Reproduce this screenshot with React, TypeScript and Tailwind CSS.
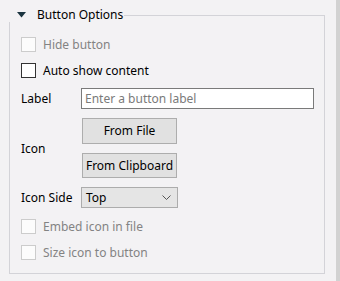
const font = { fontFamily: '"Noto Sans", "Segoe UI", sans-serif' };

const CheckRow = ({ label, checked, disabled }: { label: string; checked?: boolean; disabled?: boolean }) => (
  <div className="flex items-center h-[15px]">
    <span
      className={
        disabled
          ? "w-[15px] h-[15px] border border-[#cccccc] bg-[#fcfcfc] flex-shrink-0"
          : "w-[15px] h-[15px] border border-[#333333] bg-white flex-shrink-0"
      }
    >
      {checked ? "✓" : null}
    </span>
    <span className={disabled ? "ml-[7px] text-[#838383]" : "ml-[7px] text-black"}>{label}</span>
  </div>
);

export default function App() {
  return (
    <div className="w-[340px] h-[281px] flex bg-[#f3f2f4] text-[12px] leading-none overflow-hidden" style={font}>
      <div className="w-[336px] flex flex-col">
        {/* Header */}
        <div className="flex items-start h-[14px] mt-[8px]">
          <div className="flex items-center h-[14px] ml-[17px]">
            <svg width="9" height="6" viewBox="0 0 9 6" className="mb-[1px]">
              <polygon points="0,0 9,0 4.5,5.5" fill="#1b3440" />
            </svg>
            <span className="ml-[11px] text-black whitespace-nowrap">Button Options</span>
          </div>
          <div className="flex-1 ml-[1px] mr-[11px] mt-[7px] h-[7px] border-t border-r border-[#d3d3d8]" />
        </div>

        {/* Group body */}
        <div className="ml-[9px] w-[316px] h-[252px] border-l border-r border-b border-[#d3d3d8] pl-[11px] pt-[15px] flex flex-col">
          <CheckRow label="Hide button" disabled />
          <div className="mt-[11px]">
            <CheckRow label="Auto show content" />
          </div>

          <div className="mt-[10px] flex items-center h-[21px]">
            <span className="w-[60px]">Label</span>
            <div className="w-[233px] h-[21px] border border-[#7a7a7a] bg-white flex items-center pl-[3px] text-[#7a7a7a]">
              Enter a button label
            </div>
          </div>

          <div className="mt-[9px] flex">
            <span className="w-[60px] flex items-center pt-[2px]">Icon</span>
            <div className="flex flex-col gap-[9px] ml-[1px]">
              <button className="w-[95px] h-[26px] border border-[#adadad] bg-[#e1e1e1] text-black">From File</button>
              <button className="w-[95px] h-[25px] border border-[#adadad] bg-[#e1e1e1] text-black">From Clipboard</button>
            </div>
          </div>

          <div className="mt-[9px] flex items-center h-[21px]">
            <span className="w-[60px]">Icon Side</span>
            <div className="w-[97px] h-[21px] border border-[#acacac] bg-[#e5e5e5] flex items-center justify-between pl-[4px] pr-[6px] text-black">
              <span>Top</span>
              <svg width="9" height="5" viewBox="0 0 9 5">
                <polyline points="0.5,0.5 4.5,4.5 8.5,0.5" fill="none" stroke="#555" strokeWidth="1" />
              </svg>
            </div>
          </div>

          <div className="mt-[11px]">
            <CheckRow label="Embed icon in file" disabled />
          </div>
          <div className="mt-[11px]">
            <CheckRow label="Size icon to button" disabled />
          </div>
        </div>
      </div>
      <div className="w-[4px] h-full bg-[#d2d2d2]" />
    </div>
  );
}
